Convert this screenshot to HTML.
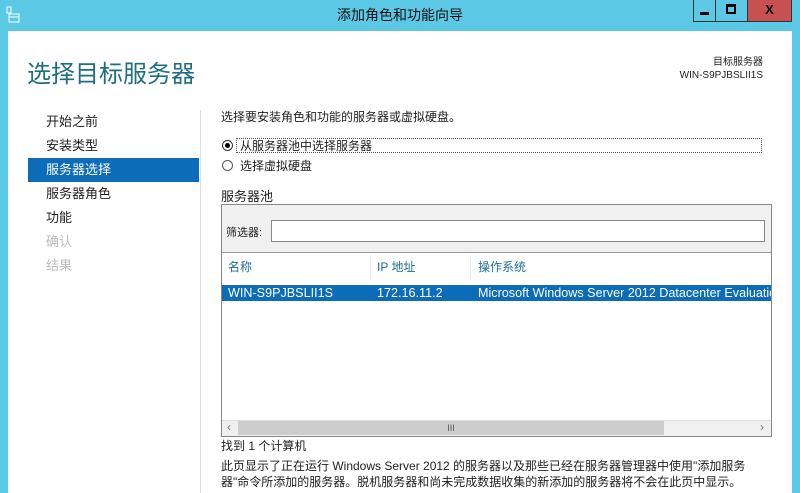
<!DOCTYPE html>
<html><head><meta charset="utf-8"><style>
*{margin:0;padding:0;box-sizing:border-box}
body{width:800px;height:493px;overflow:hidden;background:#5bc8e6;font-family:"Liberation Sans","Noto Sans CJK SC",sans-serif;font-size:12px;color:#1e1e1e;position:relative}
.a{position:absolute}
.main{left:8px;top:31px;width:784px;height:462px;background:#fff}
</style></head><body>
<div class="a" style="left:6px;top:6px;width:12px;height:16px">
<svg width="14" height="18"><rect x="1" y="1" width="4" height="6" fill="none" stroke="#fff"/><rect x="3" y="8" width="10" height="8" fill="none" stroke="#fff"/><line x1="3" y1="11" x2="13" y2="11" stroke="#fff"/></svg></div>
<div class="a" style="left:0;top:5px;width:800px;text-align:center;font-size:14px;color:#111">添加角色和功能向导</div>
<div class="a" style="left:693px;top:0;width:23px;height:22px;border:1px solid #333;border-top:0;background:#5bc8e6"><div class="a" style="left:6px;top:12px;width:9px;height:3px;background:#000"></div></div>
<div class="a" style="left:716px;top:0;width:32px;height:22px;border:1px solid #333;border-top:0;border-left:0;background:#5bc8e6"><div class="a" style="left:10px;top:4px;width:10px;height:10px;border:2px solid #000;border-top-width:3px"></div></div>
<div class="a" style="left:748px;top:0;width:44px;height:22px;border:1px solid #333;border-top:0;border-left:0;background:#c75050;font-weight:bold;font-size:13px;text-align:center;line-height:20px;color:#000">X</div>
<div class="a main"></div>
<div class="a" style="left:27px;top:54px;font-size:24px;color:#1e6e82">选择目标服务器</div>
<div class="a" style="left:600px;top:56px;width:163px;text-align:right;font-size:10px;line-height:13px">目标服务器<br>WIN-S9PJBSLII1S</div>
<div class="a" style="left:200px;top:110px;width:1px;height:383px;background:#ddd"></div>
<div class="a" style="left:46px;top:110px;font-size:13px;line-height:24px">开始之前<br>安装类型</div>
<div class="a" style="left:28px;top:158px;width:171px;height:24px;background:#0c6cb8"></div>
<div class="a" style="left:46px;top:158px;font-size:13px;line-height:24px;color:#fff">服务器选择</div>
<div class="a" style="left:46px;top:182px;font-size:13px;line-height:24px">服务器角色<br>功能<br><span style="color:#bbb">确认<br>结果</span></div>
<div class="a" style="left:221px;top:108px">选择要安装角色和功能的服务器或虚拟硬盘。</div>
<div class="a" style="left:222px;top:140px;width:11px;height:11px;border:1px solid #333;border-radius:50%"><div class="a" style="left:2px;top:2px;width:5px;height:5px;background:#000;border-radius:50%"></div></div>
<div class="a" style="left:236px;top:138px;width:526px;height:15px;border:1px dotted #555"></div>
<div class="a" style="left:240px;top:137px">从服务器池中选择服务器</div>
<div class="a" style="left:222px;top:160px;width:11px;height:11px;border:1px solid #555;border-radius:50%"></div>
<div class="a" style="left:240px;top:157px">选择虚拟硬盘</div>
<div class="a" style="left:221px;top:186px;font-size:13px">服务器池</div>
<div class="a" style="left:221px;top:204px;width:551px;height:233px;border:1px solid #888;background:#fff"></div>
<div class="a" style="left:222px;top:205px;width:549px;height:48px;background:#f0f0f0;border-bottom:1px solid #999"></div>
<div class="a" style="left:226px;top:224px;font-size:11px">筛选器:</div>
<div class="a" style="left:271px;top:220px;width:494px;height:22px;border:1px solid #888;background:#fff"></div>
<div class="a" style="left:228px;top:258px;color:#1e6e9a">名称</div>
<div class="a" style="left:370px;top:255px;width:1px;height:25px;background:#e6eef4"></div>
<div class="a" style="left:377px;top:258px;color:#1e6e9a">IP 地址</div>
<div class="a" style="left:470px;top:255px;width:1px;height:25px;background:#e6eef4"></div>
<div class="a" style="left:478px;top:258px;color:#1e6e9a">操作系统</div>
<div class="a" style="left:222px;top:285px;width:549px;height:16px;background:#0c6cb8"></div>
<div class="a" style="left:228px;top:286px;color:#fff;white-space:nowrap;width:543px;height:16px;overflow:hidden;font-size:12.6px">WIN-S9PJBSLII1S<span class="a" style="left:149px;top:0">172.16.11.2</span><span class="a" style="left:250px;top:0">Microsoft Windows Server 2012 Datacenter Evaluation</span></div>
<div class="a" style="left:222px;top:420px;width:549px;height:16px;background:#f0f0f0;border-top:1px solid #ddd"></div>
<div class="a" style="left:238px;top:421px;width:426px;height:14px;background:#cdcdcd;text-align:center;font-size:9px;line-height:14px;color:#555">III</div>
<div class="a" style="left:227px;top:420px;color:#777">‹</div>
<div class="a" style="left:760px;top:420px;color:#777">›</div>
<div class="a" style="left:221px;top:437px">找到 1 个计算机</div>
<div class="a" style="left:221px;top:458px;width:580px;line-height:16px;white-space:nowrap">此页显示了正在运行 Windows Server 2012 的服务器以及那些已经在服务器管理器中使用"添加服务<br>器"命令所添加的服务器。脱机服务器和尚未完成数据收集的新添加的服务器将不会在此页中显示。</div>
</body></html>
